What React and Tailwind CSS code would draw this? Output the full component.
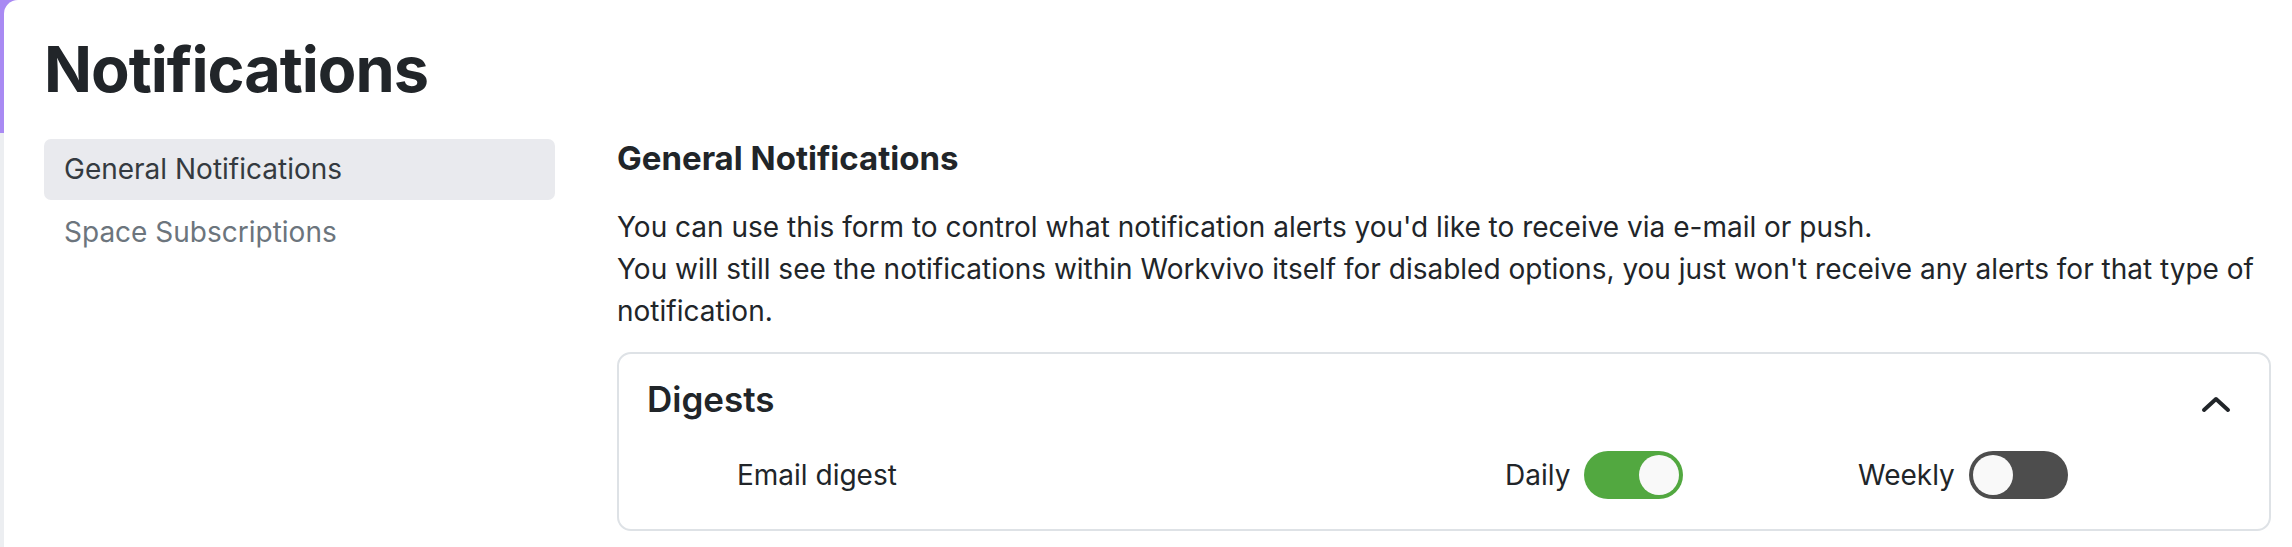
import { useState } from 'react';

const Toggle = ({ checked, onChange }) => (
  <button
    type="button"
    role="switch"
    aria-checked={checked}
    onClick={() => onChange(!checked)}
    className={`w-[99px] h-[48px] rounded-full p-[4px] flex items-center ${
      checked ? 'bg-[#52a840] justify-end' : 'bg-[#4d4d4d] justify-start'
    }`}
  >
    <span className="block w-[40px] h-[40px] rounded-full bg-[#f9f9f9]" />
  </button>
);

export default function App() {
  const [tab, setTab] = useState('general');
  const [daily, setDaily] = useState(true);
  const [weekly, setWeekly] = useState(false);
  const [open, setOpen] = useState(true);

  const tabs = [
    { id: 'general', label: 'General Notifications' },
    { id: 'spaces', label: 'Space Subscriptions' },
  ];

  return (
    <div className="min-h-screen w-full pl-[4px] bg-[linear-gradient(to_bottom,#a98af3_133px,#eceef1_133px)] font-['Inter',sans-serif] text-[#212529]">
      <div className="min-h-[547px] bg-white rounded-tl-[14px] pl-[40px] pt-[32px]">
        <h1 className="text-[63px] leading-[1.2] font-bold tracking-[-1px]">Notifications</h1>

        <div className="flex gap-[62px] mt-[31px]">
          {/* Sidebar */}
          <nav className="w-[511px] shrink-0 flex flex-col gap-[2px]">
            {tabs.map((t) => (
              <button
                key={t.id}
                type="button"
                onClick={() => setTab(t.id)}
                className={`h-[61px] px-[20px] flex items-center text-left text-[28px] leading-[42px] rounded-[7px] ${
                  tab === t.id ? 'bg-[#e9eaee] text-[#343a40]' : 'text-[#6c757d]'
                }`}
              >
                {t.label}
              </button>
            ))}
          </nav>

          {/* Main */}
          <section className="w-[1654px] shrink-0">
            <h2 className="text-[33px] leading-[1.2] font-bold">General Notifications</h2>
            <p className="mt-[28px] text-[28px] leading-[42px]">
              You can use this form to control what notification alerts you'd like to receive via e-mail or push.
              <br />
              You will still see the notifications within Workvivo itself for disabled options, you just won't receive
              any alerts for that type of notification.
            </p>

            <div className="mt-[20px] border-2 border-[#dee2e6] rounded-[14px] pl-[28px] pr-[37px] pt-[24px] pb-[30px]">
              <div className="flex justify-between items-start">
                <h3 className="text-[35px] leading-[1.2] font-semibold">Digests</h3>
                <button type="button" onClick={() => setOpen(!open)} className="mt-[17px]">
                  <svg width="32" height="20" viewBox="0 0 32 20" fill="none">
                    <path
                      d={open ? 'M4 15L16 4L28 15' : 'M4 5L16 16L28 5'}
                      stroke="#212529"
                      strokeWidth="4"
                      strokeLinecap="round"
                      strokeLinejoin="round"
                    />
                  </svg>
                </button>
              </div>

              {open && (
                <div className="mt-[31px] flex items-center text-[28px] leading-[42px]">
                  <div className="w-[858px] shrink-0 pl-[90px]">Email digest</div>
                  <div className="w-[353px] shrink-0 flex items-center gap-[14px]">
                    <span>Daily</span>
                    <Toggle checked={daily} onChange={setDaily} />
                  </div>
                  <div className="flex items-center gap-[14px]">
                    <span>Weekly</span>
                    <Toggle checked={weekly} onChange={setWeekly} />
                  </div>
                </div>
              )}
            </div>
          </section>
        </div>
      </div>
    </div>
  );
}
